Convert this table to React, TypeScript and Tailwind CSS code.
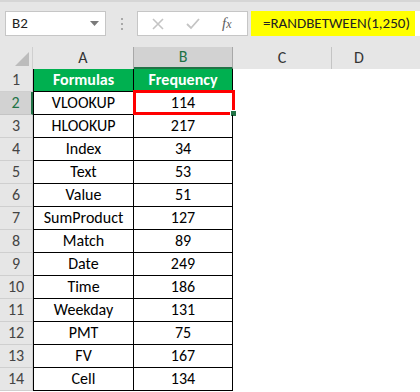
import React from 'react'

const rows: [string, number][] = [
  ['VLOOKUP', 114],
  ['HLOOKUP', 217],
  ['Index', 34],
  ['Text', 53],
  ['Value', 51],
  ['SumProduct', 127],
  ['Match', 89],
  ['Date', 249],
  ['Time', 186],
  ['Weekday', 131],
  ['PMT', 75],
  ['FV', 167],
  ['Cell', 134],
]

const font = { fontFamily: 'Carlito, Calibri, Lato, "Liberation Sans", sans-serif' }

function RowHeader({ n, active }: { n: number; active?: boolean }) {
  return (
    <div
      className={
        active
          ? 'h-[23px] flex items-center justify-center bg-[#d2d2d2] text-[#217346] text-[16px] border-b border-[#c4c4c4] border-r-2 border-r-[#217346]'
          : 'h-[23px] flex items-center justify-center bg-[#e6e6e6] text-[#444] text-[16px] border-b border-[#cfcfcf] border-r border-r-[#cfcfcf]'
      }
    >
      {n}
    </div>
  )
}

export default function App() {
  return (
    <div className="w-[420px] h-[392px] overflow-hidden bg-white text-black" style={font}>
      {/* Formula bar */}
      <div className="h-[47px] bg-[#e6e6e6] border-t-2 border-[#d6d6d6] flex items-start pt-[9px] pl-[5px]">
        <div className="w-[101px] h-[25px] bg-white border border-[#c6c6c6] flex items-center justify-between pl-[6px] pr-[6px]">
          <span className="text-[15px] text-[#222]">B2</span>
          <svg width="9" height="5" viewBox="0 0 9 5">
            <path d="M0 0 L9 0 L4.5 5 Z" fill="#7a7a7a" />
          </svg>
        </div>
        <div className="w-[31px] h-[25px] flex flex-col items-center justify-center gap-[3px]">
          <span className="w-[2px] h-[2px] bg-[#a8a8a8]" />
          <span className="w-[2px] h-[2px] bg-[#a8a8a8]" />
          <span className="w-[2px] h-[2px] bg-[#a8a8a8]" />
        </div>
        <div className="w-[111px] h-[25px] bg-white border border-[#c6c6c6] flex items-center pl-[14px]">
          <svg width="12" height="12" viewBox="0 0 12 12">
            <path d="M1 1 L11 11 M11 1 L1 11" stroke="#c4c4c4" strokeWidth="1.6" />
          </svg>
          <svg width="14" height="12" viewBox="0 0 14 12" className="ml-[22px]">
            <path d="M1 6 L5 10 L13 1" stroke="#c4c4c4" strokeWidth="1.8" fill="none" />
          </svg>
          <span
            className="ml-[22px] text-[15px] italic text-[#606060]"
            style={{ fontFamily: '"Liberation Serif", serif' }}
          >
            f<span className="text-[12px]">x</span>
          </span>
        </div>
        <div className="ml-[3px] flex-1 h-[25px] bg-white flex items-stretch">
          <div className="w-[164px] bg-[#ffff00] flex items-center pl-[12px] text-[15px] text-[#222]">
            =RANDBETWEEN(1,250)
          </div>
        </div>
      </div>

      {/* Column headers */}
      <div className="grid grid-cols-[33px_101px_99px_99px_1fr] h-[22px] bg-[#e6e6e6] text-[16px] leading-[20px] text-[#333]">
        <div className="relative border-r border-[#cfcfcf]">
          <svg width="14" height="14" viewBox="0 0 14 14" className="absolute right-[3px] bottom-[3px]">
            <path d="M14 0 L14 14 L0 14 Z" fill="#bcbcbc" />
          </svg>
        </div>
        <div className="flex items-center justify-center border-r border-[#a8a8a8]">A</div>
        <div className="flex items-center justify-center bg-[#d2d2d2] text-[#217346] border-b-2 border-[#217346] border-r border-r-[#a8a8a8]">
          B
        </div>
        <div className="flex items-center justify-center border-r border-[#c4c4c4]">C</div>
        <div className="flex items-center justify-center pr-[34px]">D</div>
      </div>

      {/* Grid */}
      <div className="grid grid-cols-[33px_101px_99px_1fr] text-[16px]">
        <RowHeader n={1} />
        <div className="h-[23px] flex items-center justify-center bg-[#00b050] text-white font-bold border-l border-r border-b border-black">
          Formulas
        </div>
        <div className="h-[23px] flex items-center justify-center bg-[#00b050] text-white font-bold border-r border-b border-black">
          Frequency
        </div>
        <div className="h-[23px]" />
        {rows.map(([name, val], i) => (
          <React.Fragment key={name}>
            <RowHeader n={i + 2} active={i === 0} />
            <div className="h-[23px] flex items-center justify-center border-l border-r border-b border-black">
              {name}
            </div>
            <div className="relative h-[23px] flex items-center justify-center border-r border-b border-black">
              {val}
              {i === 0 && (
                <div className="absolute -left-[1px] -top-[2px] -right-[3px] -bottom-[1px] border-[3px] border-[#ff0000]">
                  <span className="absolute -right-[4px] -bottom-[4px] w-[5px] h-[5px] bg-[#217346] outline outline-1 outline-white" />
                </div>
              )}
            </div>
            <div className="h-[23px]" />
          </React.Fragment>
        ))}
      </div>
    </div>
  )
}
